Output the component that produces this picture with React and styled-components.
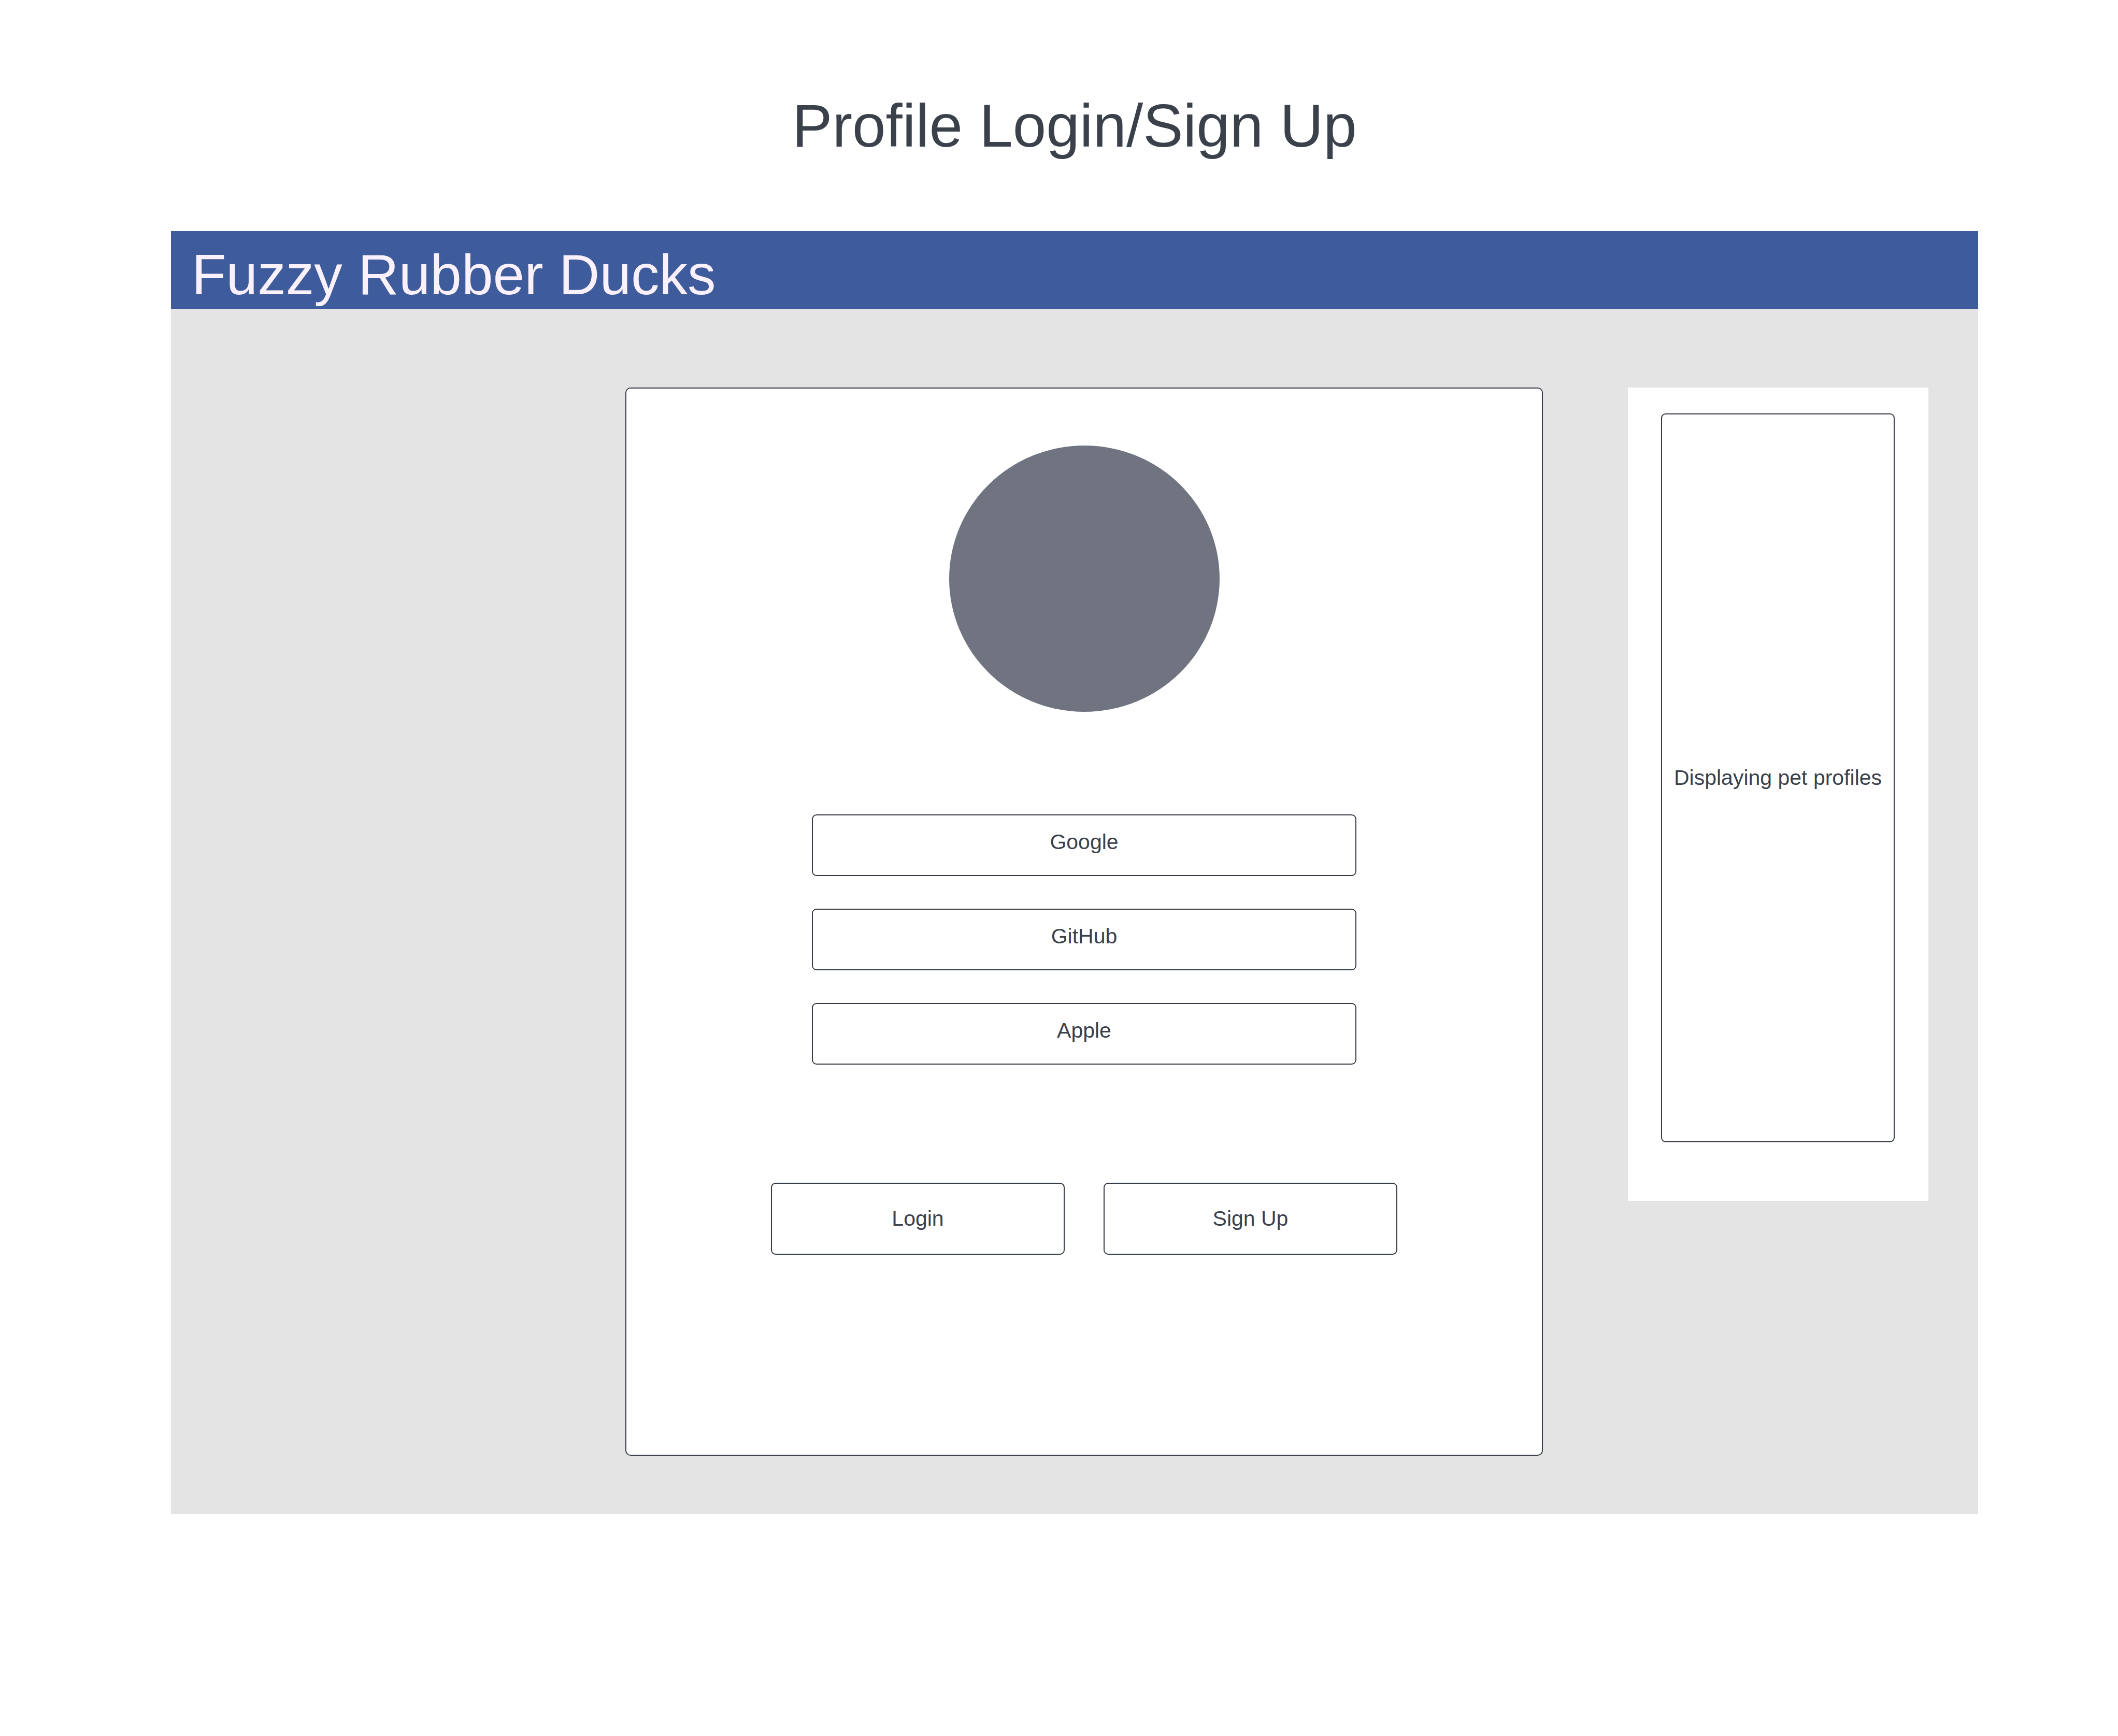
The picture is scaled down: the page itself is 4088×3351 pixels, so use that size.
import React from "react";
import styled, { createGlobalStyle } from "styled-components";

const GlobalStyle = createGlobalStyle`
  html, body {
    margin: 0;
    padding: 0;
    background: #ffffff;
  }
  body {
    font-family: "Liberation Sans", Arial, sans-serif;
    color: #3a414b;
  }
`;

const Page = styled.div`
  width: 4088px;
  min-height: 3351px;
  padding: 185px 0 0 330px;
  box-sizing: border-box;
`;

const Frame = styled.div`
  width: 3488px;
  display: flex;
  flex-direction: column;
`;

const Title = styled.h1`
  margin: 0 0 145px;
  font-size: 116px;
  font-weight: 400;
  line-height: 1;
  text-align: center;
  color: #3a414b;
`;

const Header = styled.header`
  height: 150px;
  box-sizing: border-box;
  padding: 30px 0 0 40px;
  background: #3e5c9b;
  color: #fbf1fd;
  font-size: 109px;
  line-height: 1;
`;

const Body = styled.main`
  display: flex;
  align-items: flex-start;
  gap: 164px;
  padding: 152px 96px 113px 877px;
  background: #e4e4e4;
`;

const Card = styled.section`
  width: 1771px;
  height: 2062px;
  box-sizing: border-box;
  border: 2px solid #363c45;
  border-radius: 10px;
  background: #ffffff;
  display: flex;
  flex-direction: column;
  align-items: center;
  padding-top: 110px;
`;

const Avatar = styled.div`
  width: 522px;
  height: 514px;
  border-radius: 50%;
  background: #6f7480;
  margin-bottom: 198px;
`;

const ProviderList = styled.div`
  display: flex;
  flex-direction: column;
  gap: 63px;
  margin-bottom: 228px;
`;

const Button = styled.button`
  width: ${(p) => p.$w}px;
  height: ${(p) => p.$h}px;
  box-sizing: border-box;
  border: 2px solid #363c45;
  border-radius: 9px;
  background: #ffffff;
  color: #3a414b;
  font-family: "Liberation Sans", Arial, sans-serif;
  font-size: 41px;
  line-height: 1;
  padding: 0 0 ${(p) => p.$lift}px;
  cursor: pointer;
`;

const ActionRow = styled.div`
  display: flex;
  gap: 75px;
`;

const Aside = styled.aside`
  width: 580px;
  height: 1570px;
  box-sizing: border-box;
  background: #ffffff;
  padding: 50px 65px 113px 64px;
`;

const ProfileBox = styled.div`
  height: 100%;
  box-sizing: border-box;
  border: 2px solid #363c45;
  border-radius: 9px;
  display: flex;
  align-items: center;
  justify-content: center;
  font-size: 41px;
  color: #3a414b;
  white-space: nowrap;
`;

export default function App() {
  return (
    <>
      <GlobalStyle />
      <Page>
        <Frame>
          <Title>Profile Login/Sign Up</Title>
          <Header>Fuzzy Rubber Ducks</Header>
          <Body>
            <Card>
              <Avatar />
              <ProviderList>
                {["Google", "GitHub", "Apple"].map((name) => (
                  <Button key={name} $w={1051} $h={119} $lift={12}>
                    {name}
                  </Button>
                ))}
              </ProviderList>
              <ActionRow>
                <Button $w={567} $h={139} $lift={0}>Login</Button>
                <Button $w={567} $h={139} $lift={0}>Sign Up</Button>
              </ActionRow>
            </Card>
            <Aside>
              <ProfileBox>Displaying pet profiles</ProfileBox>
            </Aside>
          </Body>
        </Frame>
      </Page>
    </>
  );
}
